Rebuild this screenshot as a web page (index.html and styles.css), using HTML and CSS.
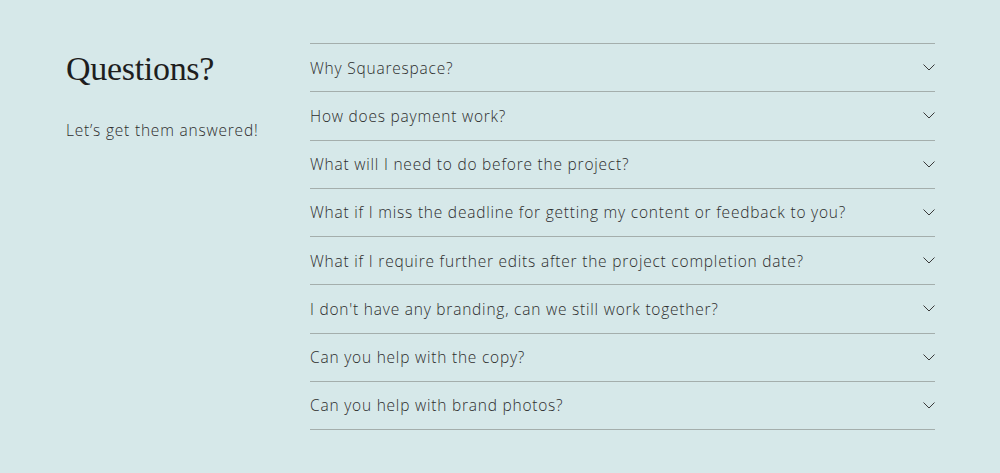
FILE: index.html
```html
<!DOCTYPE html>
<html lang="en">
<head>
<meta charset="utf-8">
<title>Questions?</title>
<link rel="stylesheet" href="styles.css">
</head>
<body>
<section class="faq">
  <div class="intro">
    <h2 class="title">Questions?</h2>
    <p class="lead">Let’s get them answered!</p>
  </div>
  <ul class="list">
    <li class="item"><span class="q">Why Squarespace?</span><svg class="chev" viewBox="0 0 12 7"><path d="M0.5 0.5 L6 6 L11.5 0.5"/></svg></li>
    <li class="item"><span class="q">How does payment work?</span><svg class="chev" viewBox="0 0 12 7"><path d="M0.5 0.5 L6 6 L11.5 0.5"/></svg></li>
    <li class="item"><span class="q">What will I need to do before the project?</span><svg class="chev" viewBox="0 0 12 7"><path d="M0.5 0.5 L6 6 L11.5 0.5"/></svg></li>
    <li class="item"><span class="q">What if I miss the deadline for getting my content or feedback to you?</span><svg class="chev" viewBox="0 0 12 7"><path d="M0.5 0.5 L6 6 L11.5 0.5"/></svg></li>
    <li class="item"><span class="q">What if I require further edits after the project completion date?</span><svg class="chev" viewBox="0 0 12 7"><path d="M0.5 0.5 L6 6 L11.5 0.5"/></svg></li>
    <li class="item"><span class="q">I don't have any branding, can we still work together?</span><svg class="chev" viewBox="0 0 12 7"><path d="M0.5 0.5 L6 6 L11.5 0.5"/></svg></li>
    <li class="item"><span class="q">Can you help with the copy?</span><svg class="chev" viewBox="0 0 12 7"><path d="M0.5 0.5 L6 6 L11.5 0.5"/></svg></li>
    <li class="item"><span class="q">Can you help with brand photos?</span><svg class="chev" viewBox="0 0 12 7"><path d="M0.5 0.5 L6 6 L11.5 0.5"/></svg></li>
  </ul>
</section>
</body>
</html>
```
FILE: styles.css
```css
html, body {
  margin: 0;
  padding: 0;
  background: #d6e8e9;
  height: 100%;
}
body {
  font-family: "Open Sans", "Liberation Sans", sans-serif;
  color: #2d2d2d;
}
.faq {
  display: flex;
  padding: 43px 65px 0 66px;
}
.intro {
  width: 244px;
  flex: none;
}
.title {
  margin: 0;
  padding-top: 3.5px;
  font-family: "Liberation Serif", "DejaVu Serif", serif;
  font-weight: 400;
  font-size: 34px;
  line-height: 44px;
  color: #1e1e1e;
  letter-spacing: -0.3px;
}
.lead {
  margin: 28.5px 0 0;
  font-size: 15.5px;
  font-weight: 300;
  line-height: 22px;
  letter-spacing: 0.8px;
}
.list {
  list-style: none;
  margin: 0;
  padding: 0;
  flex: 1;
  border-top: 1px solid #a4aeac;
}
.item {
  display: flex;
  align-items: center;
  justify-content: space-between;
  height: 47.25px;
  border-bottom: 1px solid #a4aeac;
}
.q {
  font-size: 15.5px;
  font-weight: 300;
  letter-spacing: 0.78px;
}
.chev {
  width: 12px;
  height: 7px;
  fill: none;
  stroke: #3a3a3a;
  stroke-width: 1;
}
```
